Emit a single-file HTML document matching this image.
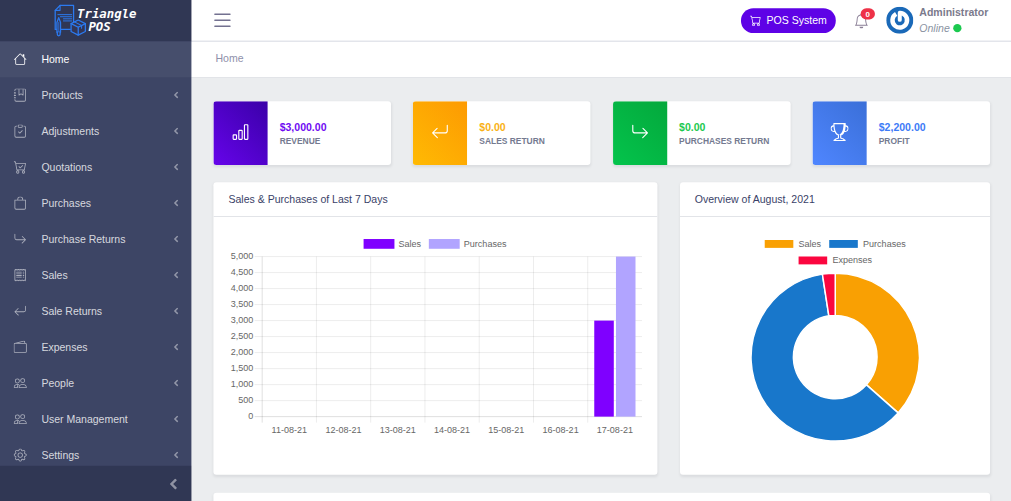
<!DOCTYPE html>
<html lang="en"><head><meta charset="utf-8"><title>Home | Triangle POS</title>
<style>
*{box-sizing:border-box}
html,body{margin:0;padding:0;width:1011px;height:501px;overflow:hidden;background:#ebedef}
body{font-family:"Liberation Sans",Arial,sans-serif;font-size:14px;line-height:1.5;color:#3c4b64}
#app{position:absolute;left:0;top:0;width:1011px;height:501px;overflow:hidden;background:#ebedef}
#content{position:absolute;left:0;top:0;width:1348px;height:668px;transform:matrix(.7526,0,0,.75,-1.84,0);transform-origin:0 0}
#side{position:absolute;left:0;top:0;width:255.5px;height:668px;transform:matrix(.75,0,0,.75,-.6,0);transform-origin:0 0}
ul{list-style:none;margin:0;padding:0}
.sidebar{position:absolute;left:0;top:0;width:255.5px;height:668px;background:#3d4565;color:#fff;display:flex;flex-direction:column}
.brand{height:55px;flex:0 0 55px;background:rgba(0,0,21,.2);position:relative}
.brand svg{position:absolute;left:0;top:0}
.nav{flex:1 1 auto;overflow:hidden}
.nl{display:flex;align-items:center;height:48px;padding:0 16px;color:rgba(255,255,255,.8);position:relative;white-space:nowrap}
.nl.active{color:#fff;background:rgba(255,255,255,.05)}
.ni{flex:0 0 56px;margin-left:-16px;height:17.5px;display:flex;justify-content:center;color:rgba(255,255,255,.57)}
.nl.active .ni{color:#fff}
.minim{flex:0 0 47px;height:47px;background:rgba(0,0,21,.2);position:relative}
.minim svg{position:absolute;right:17.5px;top:50%;margin-top:-6.5px;width:12.5px;height:16px}
.nl .cv{position:absolute;right:16.3px;top:50%;margin-top:-5px;width:7.5px;height:10px}
.wrap{position:absolute;left:256px;top:0;width:1092px;height:668px}
.header{position:relative;height:104px;background:#fff;border-bottom:1px solid #d8dbe0}
.hrow{height:56px;display:flex;align-items:center;border-bottom:2px solid #e3e5eb;position:relative}
.toggler{margin-left:25.5px;width:32px;height:32px;color:#737190;margin-top:-1px}
.hright{margin-left:auto;display:flex;align-items:center;height:54px;margin-top:1.2px}
.posbtn{display:inline-flex;align-items:center;height:33.4px;padding:0 12.2px;border-radius:50em;background:#5e02e6;color:#fff;font-size:14px;white-space:nowrap}
.posbtn svg{margin-right:7px}
.bell{position:relative;margin-left:23.45px;width:20px;height:20px;color:#8a7f96}
.badge{position:absolute;left:9.3px;top:-6.5px;height:15px;min-width:18.5px;padding:0 5px;border-radius:10rem;background:#ee3248;color:#fff;font-size:10.5px;font-weight:bold;line-height:15px;text-align:center}
.avatar{margin-left:23.6px;margin-right:.3px;width:36px;height:36px;margin-top:-1.5px}
.uinfo{margin-left:7.35px;margin-right:32.25px;line-height:1.5}
.uinfo .nm{font-weight:bold;color:#7b7a8c;display:block;margin-top:-.8px}
.uinfo .st{font-style:italic;color:#8a93a2;display:block;margin-top:0}
.dot{display:inline-block;width:11px;height:11px;border-radius:50%;background:#1bc94f;margin-left:4.1px;vertical-align:-1px}
.sub{height:47px;display:flex;align-items:center;padding-left:32.8px;padding-bottom:5px;color:#8f90aa}
.main{position:absolute;left:0;top:104px;width:1092px;padding:31px 30px 0}
.card{position:absolute;background:#fff;border-radius:4px;box-shadow:0 2px 4px rgba(0,0,21,.075);overflow:hidden}
.stat{height:85px;width:236px;top:135px;display:flex;align-items:center}
.stat .ib{width:72px;height:85px;flex:0 0 72px;display:flex;align-items:center;justify-content:center;color:#fff;margin-right:16px;padding-bottom:2.400px}
.stat .v{font-weight:bold;font-size:14px;line-height:21px;padding-top:1.6px}
.stat .l{font-weight:bold;font-size:11.2px;line-height:17.4px;color:#747a90;text-transform:uppercase}
.ch{height:46px;border-bottom:1px solid #d8dbe0;padding:12px 20px;color:#3a3f68}
.cb{padding:20px}
svg.chart{display:block}
</style></head>
<body>
<div id="app">
 <div id="content">
 <div class="wrap">
  <div class="header">
   <div class="hrow">
    <div class="toggler"><svg class="bi " width="32" height="32" viewBox="0 0 16 16" fill="currentColor" style=""><path fill-rule="evenodd" d="M2.5 12a.5.5 0 0 1 .5-.5h10a.5.5 0 0 1 0 1H3a.5.5 0 0 1-.5-.5zm0-4a.5.5 0 0 1 .5-.5h10a.5.5 0 0 1 0 1H3a.5.5 0 0 1-.5-.5zm0-4a.5.5 0 0 1 .5-.5h10a.5.5 0 0 1 0 1H3a.5.5 0 0 1-.5-.5z"/></svg></div>
    <div class="hright">
     <a class="posbtn"><svg class="bi " width="15" height="15" viewBox="0 0 16 16" fill="currentColor" style=""><path d="M0 1.500A.5.5 0 0 1 .5 1H2a.5.5 0 0 1 .485.379L2.890 3H14.500a.5.5 0 0 1 .491.592l-1.500 8A.5.5 0 0 1 13 12H4a.5.5 0 0 1-.491-.408L2.010 3.607 1.610 2H.5a.5.5 0 0 1-.5-.5zM3.102 4l1.313 7h8.170l1.313-7H3.102zM5 12a2 2 0 1 0 0 4 2 2 0 0 0 0-4zm7 0a2 2 0 1 0 0 4 2 2 0 0 0 0-4zm-7 1a1 1 0 1 1 0 2 1 1 0 0 1 0-2zm7 0a1 1 0 1 1 0 2 1 1 0 0 1 0-2z"/></svg>POS System</a>
     <div class="bell"><svg class="bi " width="20" height="20" viewBox="0 0 16 16" fill="currentColor" style=""><path d="M8 16a2 2 0 0 0 2-2H6a2 2 0 0 0 2 2zM8 1.918l-.797.161A4.002 4.002 0 0 0 4 6c0 .628-.134 2.197-.459 3.742-.160.767-.376 1.566-.663 2.258h10.244c-.287-.692-.502-1.490-.663-2.258C12.134 8.197 12 6.628 12 6a4.002 4.002 0 0 0-3.203-3.920L8 1.917zM14.220 12c.223.447.481.801.780 1H1c.299-.199.557-.553.780-1C2.680 10.200 3 6.880 3 6c0-2.420 1.720-4.440 4.005-4.901a1 1 0 1 1 1.990 0A5.002 5.002 0 0 1 13 6c0 .880.320 4.200 1.220 6z"/></svg><span class="badge">0</span></div>
     <div class="avatar"><svg width="36" height="36" viewBox="0 0 36 36"><circle cx="18" cy="18" r="18" fill="#1a69b8"/>
<path d="M18 8.30A9.7 9.7 0 1 1 13.15 9.60" fill="none" stroke="#fff" stroke-width="5.900"/>
<path d="M18 8V17.500" fill="none" stroke="#fff" stroke-width="5.300" stroke-linecap="round"/></svg></div>
     <div class="uinfo"><span class="nm">Administrator</span><span class="st">Online<i class="dot"></i></span></div>
    </div>
   </div>
   <div class="sub">Home</div>
  </div>
 </div>
 <div class="card stat" style="left:286px"><div class="ib" style="background:linear-gradient(45deg,#6604ea 0%,#3a00a8 100%)"><svg class="bi " width="24" height="24" viewBox="0 0 16 16" fill="currentColor" style=""><path d="M4 11H2v3h2v-3zm5-4H7v7h2V7zm5-5v12h-2V2h2zm-2-1a1 1 0 0 0-1 1v12a1 1 0 0 0 1 1h2a1 1 0 0 0 1-1V2a1 1 0 0 0-1-1h-2zM6 7a1 1 0 0 1 1-1h2a1 1 0 0 1 1 1v7a1 1 0 0 1-1 1H7a1 1 0 0 1-1-1V7zm-5 4a1 1 0 0 1 1-1h2a1 1 0 0 1 1 1v3a1 1 0 0 1-1 1H2a1 1 0 0 1-1-1v-3z"/></svg></div><div><div class="v" style="color:#6f0bf2">$3,000.00</div><div class="l">REVENUE</div></div></div>
 <div class="card stat" style="left:551.35px"><div class="ib" style="background:linear-gradient(45deg,#ffba03 0%,#fd9a02 100%)"><svg class="bi " width="24" height="24" viewBox="0 0 16 16" fill="currentColor" style=""><path fill-rule="evenodd" d="M14.500 1.500a.5.5 0 0 1 .5.5v4.800a2.500 2.500 0 0 1-2.500 2.500H2.707l3.347 3.346a.5.5 0 0 1-.708.708l-4.200-4.200a.5.5 0 0 1 0-.708l4-4a.5.5 0 1 1 .708.708L2.707 8.300H12.500A1.500 1.500 0 0 0 14 6.800V2a.5.5 0 0 1 .5-.5z"/></svg></div><div><div class="v" style="color:#f9b115">$0.00</div><div class="l">SALES RETURN</div></div></div>
 <div class="card stat" style="left:816.7px"><div class="ib" style="background:linear-gradient(45deg,#04c44c 0%,#04a83c 100%)"><svg class="bi " width="24" height="24" viewBox="0 0 16 16" fill="currentColor" style=""><path fill-rule="evenodd" d="M1.500 1.500A.5.5 0 0 0 1 2v4.800a2.500 2.500 0 0 0 2.500 2.500h9.793l-3.347 3.346a.5.5 0 0 0 .708.708l4.200-4.200a.5.5 0 0 0 0-.708l-4-4a.5.5 0 0 0-.708.708L13.293 8.300H3.500A1.500 1.500 0 0 1 2 6.800V2a.5.5 0 0 0-.5-.5z"/></svg></div><div><div class="v" style="color:#1bc94f">$0.00</div><div class="l">PURCHASES RETURN</div></div></div>
 <div class="card stat" style="left:1082.05px"><div class="ib" style="background:linear-gradient(45deg,#4f86ff 0%,#3a6fd8 100%)"><svg class="bi " width="24" height="24" viewBox="0 0 16 16" fill="currentColor" style=""><path d="M2.500.5A.5.5 0 0 1 3 0h10a.5.5 0 0 1 .5.5c0 .538-.012 1.050-.034 1.536a3 3 0 1 1-1.133 5.890c-.790 1.865-1.878 2.777-2.833 3.011v2.173l1.425.356c.194.048.377.135.537.255L13.300 15.100a.5.5 0 0 1-.3.900H3a.5.5 0 0 1-.3-.900l1.838-1.379c.160-.120.343-.207.537-.255L6.500 13.110v-2.173c-.955-.234-2.043-1.146-2.833-3.012a3 3 0 1 1-1.132-5.890A33.076 33.076 0 0 1 2.500.5zm.099 2.540a2 2 0 0 0 .720 3.935c-.333-1.050-.588-2.346-.720-3.935zm10.083 3.935a2 2 0 0 0 .720-3.935c-.133 1.590-.388 2.885-.720 3.935zM3.504 1c.007.517.026 1.006.056 1.469.130 2.028.457 3.546.870 4.667C5.294 9.480 6.484 10 7 10a.5.5 0 0 1 .5.5v2.610a1 1 0 0 1-.757.970l-1.426.356a.5.5 0 0 0-.179.085L4.500 15h7l-.638-.479a.501.501 0 0 0-.180-.085l-1.425-.356a1 1 0 0 1-.757-.970V10.500A.5.5 0 0 1 8 10c.516 0 1.706-.520 2.570-2.864.413-1.120.740-2.640.870-4.667.030-.463.049-.952.056-1.469H3.504z"/></svg></div><div><div class="v" style="color:#3d7bf7">$2,200.00</div><div class="l">PROFIT</div></div></div>

 <div class="card" style="left:286px;top:243px;width:589.5px;height:390px"><div class="ch">Sales &amp; Purchases of Last 7 Days</div><div class="cb"><svg class="chart" width="549.5" height="274.75" viewBox="0 0 549.5 274.75" font-family="'Liberation Sans',Arial,sans-serif" font-size="12" fill="#666">
<rect x="179.55" y="9.700" width="41" height="13" fill="#7f00ff"/>
<text x="226.05" y="20.3">Sales</text>
<rect x="266.25" y="9.700" width="41" height="13" fill="#b1a4ff"/>
<text x="312.75" y="20.3">Purchases</text>
<line x1="34.8" x2="549.5" y1="33.10" y2="33.10" stroke="rgba(0,0,0,.1)" stroke-width="1"/>
<text x="33.0" y="36.40" text-anchor="end">5,000</text>
<line x1="34.8" x2="549.5" y1="54.44" y2="54.44" stroke="rgba(0,0,0,.1)" stroke-width="1"/>
<text x="33.0" y="57.74" text-anchor="end">4,500</text>
<line x1="34.8" x2="549.5" y1="75.78" y2="75.78" stroke="rgba(0,0,0,.1)" stroke-width="1"/>
<text x="33.0" y="79.08" text-anchor="end">4,000</text>
<line x1="34.8" x2="549.5" y1="97.12" y2="97.12" stroke="rgba(0,0,0,.1)" stroke-width="1"/>
<text x="33.0" y="100.42" text-anchor="end">3,500</text>
<line x1="34.8" x2="549.5" y1="118.46" y2="118.46" stroke="rgba(0,0,0,.1)" stroke-width="1"/>
<text x="33.0" y="121.76" text-anchor="end">3,000</text>
<line x1="34.8" x2="549.5" y1="139.80" y2="139.80" stroke="rgba(0,0,0,.1)" stroke-width="1"/>
<text x="33.0" y="143.10" text-anchor="end">2,500</text>
<line x1="34.8" x2="549.5" y1="161.14" y2="161.14" stroke="rgba(0,0,0,.1)" stroke-width="1"/>
<text x="33.0" y="164.44" text-anchor="end">2,000</text>
<line x1="34.8" x2="549.5" y1="182.48" y2="182.48" stroke="rgba(0,0,0,.1)" stroke-width="1"/>
<text x="33.0" y="185.78" text-anchor="end">1,500</text>
<line x1="34.8" x2="549.5" y1="203.82" y2="203.82" stroke="rgba(0,0,0,.1)" stroke-width="1"/>
<text x="33.0" y="207.12" text-anchor="end">1,000</text>
<line x1="34.8" x2="549.5" y1="225.16" y2="225.16" stroke="rgba(0,0,0,.1)" stroke-width="1"/>
<text x="33.0" y="228.46" text-anchor="end">500</text>
<line x1="34.8" x2="549.5" y1="246.50" y2="246.50" stroke="rgba(0,0,0,.17)" stroke-width="1"/>
<text x="33.0" y="249.80" text-anchor="end">0</text>
<line x1="44.80" x2="44.80" y1="33.1" y2="254.5" stroke="rgba(0,0,0,.17)" stroke-width="1"/>
<line x1="116.90" x2="116.90" y1="33.1" y2="254.5" stroke="rgba(0,0,0,.1)" stroke-width="1"/>
<line x1="189.00" x2="189.00" y1="33.1" y2="254.5" stroke="rgba(0,0,0,.1)" stroke-width="1"/>
<line x1="261.10" x2="261.10" y1="33.1" y2="254.5" stroke="rgba(0,0,0,.1)" stroke-width="1"/>
<line x1="333.20" x2="333.20" y1="33.1" y2="254.5" stroke="rgba(0,0,0,.1)" stroke-width="1"/>
<line x1="405.30" x2="405.30" y1="33.1" y2="254.5" stroke="rgba(0,0,0,.1)" stroke-width="1"/>
<line x1="477.40" x2="477.40" y1="33.1" y2="254.5" stroke="rgba(0,0,0,.1)" stroke-width="1"/>
<text x="80.85" y="268.50" text-anchor="middle">11-08-21</text>
<text x="152.95" y="268.50" text-anchor="middle">12-08-21</text>
<text x="225.05" y="268.50" text-anchor="middle">13-08-21</text>
<text x="297.15" y="268.50" text-anchor="middle">14-08-21</text>
<text x="369.25" y="268.50" text-anchor="middle">15-08-21</text>
<text x="441.35" y="268.50" text-anchor="middle">16-08-21</text>
<text x="513.45" y="268.50" text-anchor="middle">17-08-21</text>
<rect x="486.05" y="118.46" width="25.96" height="128.04" fill="#7f00ff"/>
<rect x="514.89" y="33.10" width="25.96" height="213.40" fill="#b1a4ff"/>
</svg></div></div>
 <div class="card" style="left:905.5px;top:243px;width:412.5px;height:390px"><div class="ch">Overview of August, 2021</div><div class="cb"><svg class="chart" width="372.5" height="280" viewBox="0 0 372.5 280" font-family="'Liberation Sans',Arial,sans-serif" font-size="12" fill="#666">
<rect x="92.55" y="11" width="38" height="10.500" fill="#f9a003"/>
<text x="137.55" y="20.3">Sales</text>
<rect x="178.25" y="11" width="38" height="10.500" fill="#1877cb"/>
<text x="223.25" y="20.3">Purchases</text>
<rect x="137.55" y="33" width="38" height="10.500" fill="#fb063f"/>
<text x="182.55" y="42.3">Expenses</text>
<path d="M186.25 55.20A111.9 111.9 0 0 1 269.79 241.55L227.76 204.09A55.6 55.6 0 0 0 186.25 111.50Z" fill="#f9a003" stroke="#fff" stroke-width="2" stroke-linejoin="round"/>
<path d="M269.79 241.55A111.9 111.9 0 1 1 169.17 56.51L177.76 112.15A55.6 55.6 0 1 0 227.76 204.09Z" fill="#1877cb" stroke="#fff" stroke-width="2" stroke-linejoin="round"/>
<path d="M169.17 56.51A111.9 111.9 0 0 1 186.25 55.20L186.25 111.50A55.6 55.6 0 0 0 177.76 112.15Z" fill="#fb063f" stroke="#fff" stroke-width="2" stroke-linejoin="round"/>
</svg></div></div>
 <div class="card" style="left:286px;top:657px;width:1032px;height:100px"></div>
 </div>
 <div id="side">
 <div class="sidebar">
  <div class="brand"><svg class="logo" width="256" height="55" viewBox="0 0 256 55">
<g fill="none" stroke="#2b7af0" stroke-width="1.700" stroke-linejoin="round" stroke-linecap="round" transform="translate(1.400 0.500)">
<path d="M79.500 6.800H97.500V33"/><path d="M79.500 6.800L73 13.300V38.800H93"/><path d="M79.500 6.800V13.300H73" stroke-width="1.400"/>
<path d="M76.500 19H95M80 21.800H95M84 24.600H95M84 27.400H95" stroke-width="1.300"/>
<path d="M75.300 29.500L77.700 23L80.100 29.500V42.500H75.300Z" fill="#333656"/><path d="M77.700 29.500V41" stroke-width="1"/><path d="M75.800 42.500V45.300A1.900 1.900 0 0 0 79.600 45.300V42.500" fill="#333656"/>
<g transform="translate(0.200 -1)"><path d="M103.500 27.200L113 32V42.500L103.500 47.300L94 42.500V32Z" fill="#333656"/><path d="M94 32L103.500 36.800L113 32M103.500 36.800V47.300"/><path d="M98.500 29.700L108 34.500V38" stroke-width="1.400"/></g>
</g>
<g font-family="'DejaVu Sans Mono','Liberation Mono',monospace" font-weight="bold" font-style="oblique" font-size="16.500" fill="#fff">
<text x="103.500" y="23.500">Triangle</text><text x="118.700" y="40.800">POS</text></g>
</svg></div>
  <ul class="nav">
<li><a class="nl active"><span class="ni"><svg class="bi " width="17.5" height="17.5" viewBox="0 0 16 16" fill="currentColor" style=""><path fill-rule="evenodd" d="M2 13.5V7h1v6.500a.5.5 0 0 0 .5.5h9a.5.5 0 0 0 .5-.5V7h1v6.500a1.500 1.500 0 0 1-1.500 1.500h-9A1.500 1.500 0 0 1 2 13.5zm11-11V6l-2-2V2.500a.5.5 0 0 1 .5-.5h1a.5.5 0 0 1 .5.5z"/><path fill-rule="evenodd" d="M7.293 1.5a1 1 0 0 1 1.414 0l6.647 6.646a.5.5 0 0 1-.708.708L8 2.207 1.354 8.854a.5.5 0 1 1-.708-.708L7.293 1.5z"/></svg></span>Home</a></li>
<li><a class="nl dd"><span class="ni"><svg class="bi " width="17.5" height="17.5" viewBox="0 0 16 16" fill="currentColor" style=""><path fill-rule="evenodd" d="M6 8V1h1v6.117L8.743 6.070a.5.5 0 0 1 .514 0L11 7.117V1h1v7a.5.5 0 0 1-.757.429L9 7.083 6.757 8.430A.5.5 0 0 1 6 8z"/><path d="M3 0h10a2 2 0 0 1 2 2v12a2 2 0 0 1-2 2H3a2 2 0 0 1-2-2v-1h1v1a1 1 0 0 0 1 1h10a1 1 0 0 0 1-1V2a1 1 0 0 0-1-1H3a1 1 0 0 0-1 1v1H1V2a2 2 0 0 1 2-2z"/><path d="M1 5v-.5a.5.5 0 0 1 1 0V5h.5a.5.5 0 0 1 0 1h-2a.5.5 0 0 1 0-1H1zm0 3v-.5a.5.5 0 0 1 1 0V8h.5a.5.5 0 0 1 0 1h-2a.5.5 0 0 1 0-1H1zm0 3v-.5a.5.5 0 0 1 1 0v.5h.5a.5.5 0 0 1 0 1h-2a.5.5 0 0 1 0-1H1z"/></svg></span>Products<svg class="cv" viewBox="0 0 11 14"><path fill="rgba(255,255,255,.44)" d="M9.148 2.352l-4.148 4.148 4.148 4.148q0.148 0.148 0.148 0.352t-0.148 0.352l-1.297 1.297q-0.148 0.148-0.352 0.148t-0.352-0.148l-5.797-5.797q-0.148-0.148-0.148-0.352t0.148-0.352l5.797-5.797q0.148-0.148 0.352-0.148t0.352 0.148l1.297 1.297q0.148 0.148 0.148 0.352t-0.148 0.352z"/></svg></a></li>
<li><a class="nl dd"><span class="ni"><svg class="bi " width="17.5" height="17.5" viewBox="0 0 16 16" fill="currentColor" style=""><path fill-rule="evenodd" d="M10.854 7.146a.5.5 0 0 1 0 .708l-3 3a.5.5 0 0 1-.708 0l-1.500-1.500a.5.5 0 1 1 .708-.708L7.500 9.793l2.646-2.647a.5.5 0 0 1 .708 0z"/><path d="M4 1.500H3a2 2 0 0 0-2 2V14a2 2 0 0 0 2 2h10a2 2 0 0 0 2-2V3.500a2 2 0 0 0-2-2h-1v1h1a1 1 0 0 1 1 1V14a1 1 0 0 1-1 1H3a1 1 0 0 1-1-1V3.500a1 1 0 0 1 1-1h1v-1z"/><path d="M9.500 1a.5.5 0 0 1 .5.5v1a.5.5 0 0 1-.5.5h-3a.5.5 0 0 1-.5-.5v-1a.5.5 0 0 1 .5-.5h3zm-3-1A1.500 1.500 0 0 0 5 1.500v1A1.500 1.500 0 0 0 6.500 4h3A1.500 1.500 0 0 0 11 2.500v-1A1.500 1.500 0 0 0 9.500 0h-3z"/></svg></span>Adjustments<svg class="cv" viewBox="0 0 11 14"><path fill="rgba(255,255,255,.44)" d="M9.148 2.352l-4.148 4.148 4.148 4.148q0.148 0.148 0.148 0.352t-0.148 0.352l-1.297 1.297q-0.148 0.148-0.352 0.148t-0.352-0.148l-5.797-5.797q-0.148-0.148-0.148-0.352t0.148-0.352l5.797-5.797q0.148-0.148 0.352-0.148t0.352 0.148l1.297 1.297q0.148 0.148 0.148 0.352t-0.148 0.352z"/></svg></a></li>
<li><a class="nl dd"><span class="ni"><svg class="bi " width="17.5" height="17.5" viewBox="0 0 16 16" fill="currentColor" style=""><path d="M11.354 6.354a.5.5 0 0 0-.708-.708L8 8.293 6.854 7.146a.5.5 0 1 0-.708.708l1.500 1.500a.5.5 0 0 0 .708 0l3-3z"/><path d="M0 1.500A.5.5 0 0 1 .5 1H2a.5.5 0 0 1 .485.379L2.890 3H14.500a.5.5 0 0 1 .491.592l-1.500 8A.5.5 0 0 1 13 12H4a.5.5 0 0 1-.491-.408L2.010 3.607 1.610 2H.5a.5.5 0 0 1-.5-.5zM3.102 4l1.313 7h8.170l1.313-7H3.102zM5 12a2 2 0 1 0 0 4 2 2 0 0 0 0-4zm7 0a2 2 0 1 0 0 4 2 2 0 0 0 0-4zm-7 1a1 1 0 1 1 0 2 1 1 0 0 1 0-2zm7 0a1 1 0 1 1 0 2 1 1 0 0 1 0-2z"/></svg></span>Quotations<svg class="cv" viewBox="0 0 11 14"><path fill="rgba(255,255,255,.44)" d="M9.148 2.352l-4.148 4.148 4.148 4.148q0.148 0.148 0.148 0.352t-0.148 0.352l-1.297 1.297q-0.148 0.148-0.352 0.148t-0.352-0.148l-5.797-5.797q-0.148-0.148-0.148-0.352t0.148-0.352l5.797-5.797q0.148-0.148 0.352-0.148t0.352 0.148l1.297 1.297q0.148 0.148 0.148 0.352t-0.148 0.352z"/></svg></a></li>
<li><a class="nl dd"><span class="ni"><svg class="bi " width="17.5" height="17.5" viewBox="0 0 16 16" fill="currentColor" style=""><path d="M8 1a2.500 2.500 0 0 1 2.500 2.500V4h-5v-.5A2.500 2.500 0 0 1 8 1zm3.500 3v-.5a3.500 3.500 0 1 0-7 0V4H1v10a2 2 0 0 0 2 2h10a2 2 0 0 0 2-2V4h-3.500zM2 5h12v9a1 1 0 0 1-1 1H3a1 1 0 0 1-1-1V5z"/></svg></span>Purchases<svg class="cv" viewBox="0 0 11 14"><path fill="rgba(255,255,255,.44)" d="M9.148 2.352l-4.148 4.148 4.148 4.148q0.148 0.148 0.148 0.352t-0.148 0.352l-1.297 1.297q-0.148 0.148-0.352 0.148t-0.352-0.148l-5.797-5.797q-0.148-0.148-0.148-0.352t0.148-0.352l5.797-5.797q0.148-0.148 0.352-0.148t0.352 0.148l1.297 1.297q0.148 0.148 0.148 0.352t-0.148 0.352z"/></svg></a></li>
<li><a class="nl dd"><span class="ni"><svg class="bi " width="17.5" height="17.5" viewBox="0 0 16 16" fill="currentColor" style=""><path fill-rule="evenodd" d="M1.500 1.500A.5.5 0 0 0 1 2v4.800a2.500 2.500 0 0 0 2.500 2.500h9.793l-3.347 3.346a.5.5 0 0 0 .708.708l4.200-4.200a.5.5 0 0 0 0-.708l-4-4a.5.5 0 0 0-.708.708L13.293 8.300H3.500A1.500 1.500 0 0 1 2 6.800V2a.5.5 0 0 0-.5-.5z"/></svg></span>Purchase Returns<svg class="cv" viewBox="0 0 11 14"><path fill="rgba(255,255,255,.44)" d="M9.148 2.352l-4.148 4.148 4.148 4.148q0.148 0.148 0.148 0.352t-0.148 0.352l-1.297 1.297q-0.148 0.148-0.352 0.148t-0.352-0.148l-5.797-5.797q-0.148-0.148-0.148-0.352t0.148-0.352l5.797-5.797q0.148-0.148 0.352-0.148t0.352 0.148l1.297 1.297q0.148 0.148 0.148 0.352t-0.148 0.352z"/></svg></a></li>
<li><a class="nl dd"><span class="ni"><svg class="bi " width="17.5" height="17.5" viewBox="0 0 16 16" fill="currentColor" style=""><path d="M1.920.506a.5.5 0 0 1 .434.140L3 1.293l.646-.647a.5.5 0 0 1 .708 0L5 1.293l.646-.647a.5.5 0 0 1 .708 0L7 1.293l.646-.647a.5.5 0 0 1 .708 0L9 1.293l.646-.647a.5.5 0 0 1 .708 0l.646.647.646-.647a.5.5 0 0 1 .708 0l.646.647.646-.647a.5.5 0 0 1 .801.130l.5 1A.5.5 0 0 1 15 2v12a.5.5 0 0 1-.053.224l-.5 1a.5.5 0 0 1-.8.130L13 14.707l-.646.647a.5.5 0 0 1-.708 0L11 14.707l-.646.647a.5.5 0 0 1-.708 0L9 14.707l-.646.647a.5.5 0 0 1-.708 0L7 14.707l-.646.647a.5.5 0 0 1-.708 0L5 14.707l-.646.647a.5.5 0 0 1-.708 0L3 14.707l-.646.647a.5.5 0 0 1-.801-.130l-.5-1A.5.5 0 0 1 1 14V2a.5.5 0 0 1 .053-.224l.5-1a.5.5 0 0 1 .367-.270zm.217 1.338L2 2.118v11.764l.137.274.510-.510a.5.5 0 0 1 .707 0l.646.647.646-.646a.5.5 0 0 1 .708 0l.646.646.646-.646a.5.5 0 0 1 .708 0l.646.646.646-.646a.5.5 0 0 1 .708 0l.646.646.646-.646a.5.5 0 0 1 .708 0l.646.646.646-.646a.5.5 0 0 1 .708 0l.509.509.137-.274V2.118l-.137-.274-.510.510a.5.5 0 0 1-.707 0L12 1.707l-.646.647a.5.5 0 0 1-.708 0L10 1.707l-.646.647a.5.5 0 0 1-.708 0L8 1.707l-.646.647a.5.5 0 0 1-.708 0L6 1.707l-.646.647a.5.5 0 0 1-.708 0L4 1.707l-.646.647a.5.5 0 0 1-.708 0l-.509-.510z"/><path d="M3 4.500a.5.5 0 0 1 .5-.5h6a.5.5 0 1 1 0 1h-6a.5.5 0 0 1-.5-.5zm0 2a.5.5 0 0 1 .5-.5h6a.5.5 0 1 1 0 1h-6a.5.5 0 0 1-.5-.5zm0 2a.5.5 0 0 1 .5-.5h6a.5.5 0 1 1 0 1h-6a.5.5 0 0 1-.5-.5zm0 2a.5.5 0 0 1 .5-.5h6a.5.5 0 0 1 0 1h-6a.5.5 0 0 1-.5-.5zm8-6a.5.5 0 0 1 .5-.5h1a.5.5 0 0 1 0 1h-1a.5.5 0 0 1-.5-.5zm0 2a.5.5 0 0 1 .5-.5h1a.5.5 0 0 1 0 1h-1a.5.5 0 0 1-.5-.5zm0 2a.5.5 0 0 1 .5-.5h1a.5.5 0 0 1 0 1h-1a.5.5 0 0 1-.5-.5zm0 2a.5.5 0 0 1 .5-.5h1a.5.5 0 0 1 0 1h-1a.5.5 0 0 1-.5-.5z"/></svg></span>Sales<svg class="cv" viewBox="0 0 11 14"><path fill="rgba(255,255,255,.44)" d="M9.148 2.352l-4.148 4.148 4.148 4.148q0.148 0.148 0.148 0.352t-0.148 0.352l-1.297 1.297q-0.148 0.148-0.352 0.148t-0.352-0.148l-5.797-5.797q-0.148-0.148-0.148-0.352t0.148-0.352l5.797-5.797q0.148-0.148 0.352-0.148t0.352 0.148l1.297 1.297q0.148 0.148 0.148 0.352t-0.148 0.352z"/></svg></a></li>
<li><a class="nl dd"><span class="ni"><svg class="bi " width="17.5" height="17.5" viewBox="0 0 16 16" fill="currentColor" style=""><path fill-rule="evenodd" d="M14.500 1.500a.5.5 0 0 1 .5.5v4.800a2.500 2.500 0 0 1-2.500 2.500H2.707l3.347 3.346a.5.5 0 0 1-.708.708l-4.200-4.200a.5.5 0 0 1 0-.708l4-4a.5.5 0 1 1 .708.708L2.707 8.300H12.500A1.500 1.500 0 0 0 14 6.800V2a.5.5 0 0 1 .5-.5z"/></svg></span>Sale Returns<svg class="cv" viewBox="0 0 11 14"><path fill="rgba(255,255,255,.44)" d="M9.148 2.352l-4.148 4.148 4.148 4.148q0.148 0.148 0.148 0.352t-0.148 0.352l-1.297 1.297q-0.148 0.148-0.352 0.148t-0.352-0.148l-5.797-5.797q-0.148-0.148-0.148-0.352t0.148-0.352l5.797-5.797q0.148-0.148 0.352-0.148t0.352 0.148l1.297 1.297q0.148 0.148 0.148 0.352t-0.148 0.352z"/></svg></a></li>
<li><a class="nl dd"><span class="ni"><svg class="bi " width="17.5" height="17.5" viewBox="0 0 16 16" fill="currentColor" style=""><path d="M12.136.326A1.500 1.500 0 0 1 14 1.780V3h.5A1.500 1.500 0 0 1 16 4.500v9a1.500 1.500 0 0 1-1.500 1.500h-13A1.500 1.500 0 0 1 0 13.500v-9a1.500 1.500 0 0 1 1.432-1.499L12.136.326zM5.562 3H13V1.780a.5.5 0 0 0-.621-.484L5.562 3zM1.500 4a.5.5 0 0 0-.5.5v9a.5.5 0 0 0 .5.5h13a.5.5 0 0 0 .5-.5v-9a.5.5 0 0 0-.5-.5h-13z"/></svg></span>Expenses<svg class="cv" viewBox="0 0 11 14"><path fill="rgba(255,255,255,.44)" d="M9.148 2.352l-4.148 4.148 4.148 4.148q0.148 0.148 0.148 0.352t-0.148 0.352l-1.297 1.297q-0.148 0.148-0.352 0.148t-0.352-0.148l-5.797-5.797q-0.148-0.148-0.148-0.352t0.148-0.352l5.797-5.797q0.148-0.148 0.352-0.148t0.352 0.148l1.297 1.297q0.148 0.148 0.148 0.352t-0.148 0.352z"/></svg></a></li>
<li><a class="nl dd"><span class="ni"><svg class="bi " width="17.5" height="17.5" viewBox="0 0 16 16" fill="currentColor" style=""><path d="M15 14s1 0 1-1-1-4-5-4-5 3-5 4 1 1 1 1h8zm-7.978-1A.261.261 0 0 1 7 12.996c.001-.264.167-1.030.760-1.720C8.312 10.629 9.282 10 11 10c1.717 0 2.687.630 3.240 1.276.593.690.758 1.457.760 1.720l-.008.002a.274.274 0 0 1-.014.002H7.022zM11 7a2 2 0 1 0 0-4 2 2 0 0 0 0 4zm3-2a3 3 0 1 1-6 0 3 3 0 0 1 6 0zM6.936 9.280a5.880 5.880 0 0 0-1.230-.247A7.350 7.350 0 0 0 5 9c-4 0-5 3-5 4 0 .667.333 1 1 1h4.216A2.238 2.238 0 0 1 5 13c0-1.010.377-2.042 1.090-2.904.243-.294.526-.569.846-.816zM4.920 10A5.493 5.493 0 0 0 4 13H1c0-.260.164-1.030.760-1.724.545-.636 1.492-1.256 3.160-1.275zM1.500 5.500a3 3 0 1 1 6 0 3 3 0 0 1-6 0zm3-2a2 2 0 1 0 0 4 2 2 0 0 0 0-4z"/></svg></span>People<svg class="cv" viewBox="0 0 11 14"><path fill="rgba(255,255,255,.44)" d="M9.148 2.352l-4.148 4.148 4.148 4.148q0.148 0.148 0.148 0.352t-0.148 0.352l-1.297 1.297q-0.148 0.148-0.352 0.148t-0.352-0.148l-5.797-5.797q-0.148-0.148-0.148-0.352t0.148-0.352l5.797-5.797q0.148-0.148 0.352-0.148t0.352 0.148l1.297 1.297q0.148 0.148 0.148 0.352t-0.148 0.352z"/></svg></a></li>
<li><a class="nl dd"><span class="ni"><svg class="bi " width="17.5" height="17.5" viewBox="0 0 16 16" fill="currentColor" style=""><path d="M15 14s1 0 1-1-1-4-5-4-5 3-5 4 1 1 1 1h8zm-7.978-1A.261.261 0 0 1 7 12.996c.001-.264.167-1.030.760-1.720C8.312 10.629 9.282 10 11 10c1.717 0 2.687.630 3.240 1.276.593.690.758 1.457.760 1.720l-.008.002a.274.274 0 0 1-.014.002H7.022zM11 7a2 2 0 1 0 0-4 2 2 0 0 0 0 4zm3-2a3 3 0 1 1-6 0 3 3 0 0 1 6 0zM6.936 9.280a5.880 5.880 0 0 0-1.230-.247A7.350 7.350 0 0 0 5 9c-4 0-5 3-5 4 0 .667.333 1 1 1h4.216A2.238 2.238 0 0 1 5 13c0-1.010.377-2.042 1.090-2.904.243-.294.526-.569.846-.816zM4.920 10A5.493 5.493 0 0 0 4 13H1c0-.260.164-1.030.760-1.724.545-.636 1.492-1.256 3.160-1.275zM1.500 5.500a3 3 0 1 1 6 0 3 3 0 0 1-6 0zm3-2a2 2 0 1 0 0 4 2 2 0 0 0 0-4z"/></svg></span>User Management<svg class="cv" viewBox="0 0 11 14"><path fill="rgba(255,255,255,.44)" d="M9.148 2.352l-4.148 4.148 4.148 4.148q0.148 0.148 0.148 0.352t-0.148 0.352l-1.297 1.297q-0.148 0.148-0.352 0.148t-0.352-0.148l-5.797-5.797q-0.148-0.148-0.148-0.352t0.148-0.352l5.797-5.797q0.148-0.148 0.352-0.148t0.352 0.148l1.297 1.297q0.148 0.148 0.148 0.352t-0.148 0.352z"/></svg></a></li>
<li><a class="nl dd"><span class="ni"><svg class="bi " width="17.5" height="17.5" viewBox="0 0 16 16" fill="currentColor" style=""><path d="M8 4.754a3.246 3.246 0 1 0 0 6.492 3.246 3.246 0 0 0 0-6.492zM5.754 8a2.246 2.246 0 1 1 4.492 0 2.246 2.246 0 0 1-4.492 0z"/><path d="M9.796 1.343c-.527-1.790-3.065-1.790-3.592 0l-.094.319a.873.873 0 0 1-1.255.520l-.292-.160c-1.640-.892-3.433.902-2.540 2.541l.159.292a.873.873 0 0 1-.520 1.255l-.319.094c-1.790.527-1.790 3.065 0 3.592l.319.094a.873.873 0 0 1 .520 1.255l-.160.292c-.892 1.640.901 3.434 2.541 2.540l.292-.159a.873.873 0 0 1 1.255.520l.094.319c.527 1.790 3.065 1.790 3.592 0l.094-.319a.873.873 0 0 1 1.255-.520l.292.160c1.640.893 3.434-.902 2.540-2.541l-.159-.292a.873.873 0 0 1 .520-1.255l.319-.094c1.790-.527 1.790-3.065 0-3.592l-.319-.094a.873.873 0 0 1-.520-1.255l.160-.292c.893-1.640-.902-3.433-2.541-2.540l-.292.159a.873.873 0 0 1-1.255-.520l-.094-.319zm-2.633.283c.246-.835 1.428-.835 1.674 0l.094.319a1.873 1.873 0 0 0 2.693 1.115l.291-.160c.764-.415 1.600.420 1.184 1.185l-.159.292a1.873 1.873 0 0 0 1.116 2.692l.318.094c.835.246.835 1.428 0 1.674l-.319.094a1.873 1.873 0 0 0-1.115 2.693l.160.291c.415.764-.420 1.600-1.185 1.184l-.291-.159a1.873 1.873 0 0 0-2.693 1.116l-.094.318c-.246.835-1.428.835-1.674 0l-.094-.319a1.873 1.873 0 0 0-2.692-1.115l-.292.160c-.764.415-1.600-.420-1.184-1.185l.159-.291A1.873 1.873 0 0 0 1.945 8.930l-.319-.094c-.835-.246-.835-1.428 0-1.674l.319-.094A1.873 1.873 0 0 0 3.060 4.377l-.160-.292c-.415-.764.420-1.600 1.185-1.184l.292.159a1.873 1.873 0 0 0 2.692-1.115l.094-.319z"/></svg></span>Settings<svg class="cv" viewBox="0 0 11 14"><path fill="rgba(255,255,255,.44)" d="M9.148 2.352l-4.148 4.148 4.148 4.148q0.148 0.148 0.148 0.352t-0.148 0.352l-1.297 1.297q-0.148 0.148-0.352 0.148t-0.352-0.148l-5.797-5.797q-0.148-0.148-0.148-0.352t0.148-0.352l5.797-5.797q0.148-0.148 0.352-0.148t0.352 0.148l1.297 1.297q0.148 0.148 0.148 0.352t-0.148 0.352z"/></svg></a></li>
  </ul>
  <div class="minim"><svg viewBox="0 0 11 14"><path fill="rgba(255,255,255,.46)" d="M9.148 2.352l-4.148 4.148 4.148 4.148q0.148 0.148 0.148 0.352t-0.148 0.352l-1.297 1.297q-0.148 0.148-0.352 0.148t-0.352-0.148l-5.797-5.797q-0.148-0.148-0.148-0.352t0.148-0.352l5.797-5.797q0.148-0.148 0.352-0.148t0.352 0.148l1.297 1.297q0.148 0.148 0.148 0.352t-0.148 0.352z"/></svg></div>
 </div>
 </div>
</div>
</body></html>
